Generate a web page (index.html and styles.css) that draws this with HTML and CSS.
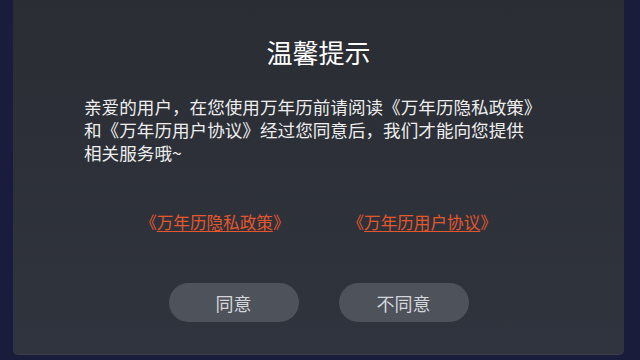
FILE: index.html
```html
<!DOCTYPE html>
<html lang="zh-CN">
<head>
<meta charset="utf-8">
<title>温馨提示</title>
<link rel="stylesheet" href="styles.css">
</head>
<body>
<div class="screen">
  <div class="dialog">
    <h1 class="title">温馨提示</h1>
    <p class="message">亲爱的用户，在您使用万年历前请阅读《万年历隐私政策》<br>和《万年历用户协议》经过您同意后，我们才能向您提供<br>相关服务哦~</p>
    <div class="links">
      <span class="link">《<a class="link-text" href="#">万年历隐私政策</a>》</span>
      <span class="link">《<a class="link-text" href="#">万年历用户协议</a>》</span>
    </div>
    <div class="actions">
      <button class="btn" type="button">同意</button>
      <button class="btn" type="button">不同意</button>
    </div>
  </div>
</div>
</body>
</html>
```

FILE: styles.css
```css
html, body {
  margin: 0;
  padding: 0;
  background: #1a1c3b;
  width: 640px;
  height: 360px;
  overflow: hidden;
  font-family: "Noto Sans CJK SC", "Noto Sans", sans-serif;
}

.screen {
  display: flex;
  padding-left: 13px;
  height: 360px;
  box-sizing: border-box;
}

.dialog {
  width: 611px;
  height: 355px;
  box-sizing: border-box;
  background: linear-gradient(#2a2d33, #30343e);
  border-radius: 0 0 5px 5px;
  border-bottom: 1px solid #3a3e48;
  display: flex;
  flex-direction: column;
  align-items: center;
  padding-top: 34px;
}

.title {
  margin: 0;
  font-size: 26px;
  line-height: 36px;
  font-weight: 400;
  color: #ffffff;
}

.message {
  margin: 25px 0 0 0;
  align-self: flex-start;
  padding-left: 71px;
  font-size: 17.6px;
  line-height: 23px;
  color: #eeeeee;
  white-space: nowrap;
}

.links {
  margin-top: 47px;
  display: flex;
  gap: 58px;
  font-size: 16.6px;
  line-height: 23px;
  color: #e4572c;
}

.link-text {
  color: #e4572c;
  text-decoration: underline;
  text-underline-offset: 2px;
}

.actions {
  margin-top: 49px;
  display: flex;
  gap: 40px;
}

.btn {
  width: 130px;
  height: 39px;
  border: none;
  border-radius: 20px;
  background: #4e525b;
  color: #d4d6da;
  font-family: "Noto Sans CJK SC", "Noto Sans", sans-serif;
  font-size: 18px;
  padding: 0;
}
```
